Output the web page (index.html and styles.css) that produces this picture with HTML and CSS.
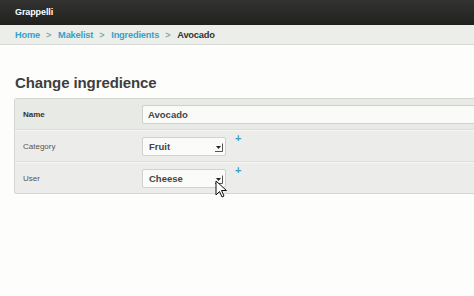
FILE: index.html
```html
<!DOCTYPE html>
<html>
<head>
<meta charset="utf-8">
<link rel="stylesheet" href="styles.css">
</head>
<body>
<header class="topbar"><span class="brand">Grappelli</span></header>
<nav class="crumbs">
  <a class="crumb">Home</a><span class="sep">&gt;</span>
  <a class="crumb">Makelist</a><span class="sep">&gt;</span>
  <a class="crumb">Ingredients</a><span class="sep">&gt;</span>
  <span class="current">Avocado</span>
</nav>
<main class="content">
  <h1 class="title">Change ingredience</h1>
  <div class="fieldset">
    <div class="row">
      <div class="label strong">Name</div>
      <div class="field"><div class="input">Avocado</div></div>
    </div>
    <div class="row">
      <div class="label">Category</div>
      <div class="field">
        <div class="select"><span>Fruit</span><span class="arrow"><svg width="9" height="9" viewBox="0 0 9 9"><path d="M2 3h5l-2.5 3z" fill="#222"/><path d="M1 8.5h7.5V0.5" fill="none" stroke="#555"/></svg></span></div>
        <span class="plus">+</span>
      </div>
    </div>
    <div class="row">
      <div class="label">User</div>
      <div class="field">
        <div class="select"><span>Cheese</span><span class="arrow"><svg width="9" height="9" viewBox="0 0 9 9"><path d="M2 3h5l-2.5 3z" fill="#222"/><path d="M1 8.5h7.5V0.5" fill="none" stroke="#555"/></svg></span></div>
        <span class="plus">+</span>
        <svg class="cursor" width="12" height="18" viewBox="0 0 12 18"><path d="M1 1v14l3.5-3.5 2.5 5.5 2-1-2.5-5.5h5z" fill="#fff" stroke="#111" stroke-width="1"/></svg>
      </div>
    </div>
  </div>
</main>
</body>
</html>
```
FILE: styles.css
```css
* { box-sizing: border-box; }
html, body { margin: 0; padding: 0; }
body {
  width: 474px; height: 296px; overflow: hidden;
  background: #fdfdfb;
  font-family: "Liberation Sans", Arial, sans-serif;
  color: #444;
}
.topbar {
  height: 25px;
  background: linear-gradient(#333331, #20201e);
  display: flex; align-items: center;
  padding-left: 15px;
}
.brand { color: #fff; font-weight: bold; font-size: 9px; margin-top: -1px; letter-spacing: -0.1px; }
.crumbs {
  height: 20px;
  background: #eceee9;
  border-bottom: 1px solid #d8dad5;
  display: flex; align-items: center;
  padding-left: 15px;
  font-size: 9.3px; font-weight: bold;
  letter-spacing: -0.2px;
}
.crumb { color: #3aa0c6; }
.sep { color: #8aa5b0; margin: 0 7px 0 6px; font-size: 9px; }
.current { color: #333; }
.content { padding: 28px 0 0 14px; }
.title {
  margin: 0 0 5px 1px;
  font-size: 15px; font-weight: bold; color: #3e3e3e;
  line-height: 20px;
  letter-spacing: -0.1px;
}
.fieldset {
  border: 1px solid #d4d6d1;
  border-right: none;
  border-radius: 3px 0 0 3px;
  background: #ecedea;
}
.row {
  display: flex; align-items: center;
  height: 32px;
  border-top: 1px solid #f6f7f4;
  border-bottom: 1px solid #dcdeda;
}
.row:first-child { height: 31px; background: #e8eae6; border-top: none; }
.row:last-child { border-bottom: none; height: 31px; }
.label { width: 127px; padding-left: 8px; font-size: 8px; color: #555; }
.label.strong { font-weight: bold; color: #333; }
.field { flex: 1; display: flex; align-items: center; position: relative; }
.input {
  flex: 1; height: 19px;
  background: #fafbf9;
  border: 1px solid #cfd1cc; border-right: none;
  border-radius: 2px 0 0 2px;
  padding-left: 5px;
  font-size: 9.5px; font-weight: bold; color: #444;
  display: flex; align-items: center;
}
.select {
  width: 84px; height: 19px;
  background: #fbfbfa;
  border: 1px solid #cfd1cc; border-radius: 2px;
  display: flex; align-items: center; justify-content: space-between;
  padding: 0 2px 0 6px;
  font-size: 9.5px; font-weight: bold; color: #444;
}
.arrow { display: flex; margin-top: 2px; }
.plus {
  color: #3aa0c6; font-weight: bold; font-size: 11px;
  margin-left: 9px; align-self: flex-start; margin-top: -5px;
}
.cursor { position: absolute; left: 73px; top: 11px; }
```
